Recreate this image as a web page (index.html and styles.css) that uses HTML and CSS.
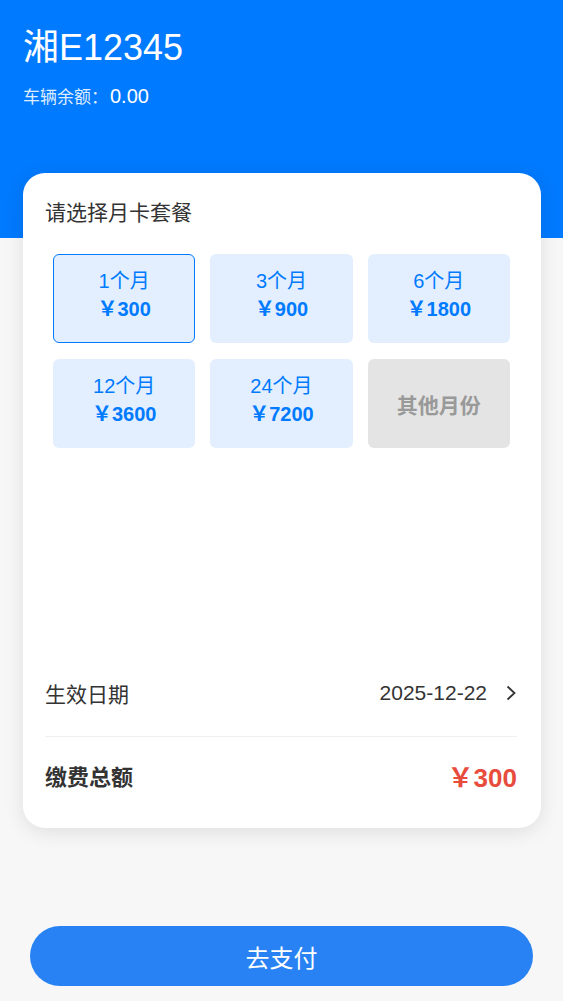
FILE: index.html
```html
<!DOCTYPE html>
<html lang="zh-CN">
<head>
  <meta charset="UTF-8">
  <meta name="viewport" content="width=device-width, initial-scale=1.0">
  <title>月卡缴费</title>
  <link rel="stylesheet" href="styles.css">
</head>
<body>

<div class="header">
  <div class="plate">湘E12345</div>
  <div class="balance">车辆余额：<span class="balance-num">0.00</span></div>
</div>

<div class="card">
  <div class="card-title">请选择月卡套餐</div>
  <div class="options">
    <div class="option active">
      <div class="months">1个月</div>
      <div class="price">￥300</div>
    </div>
    <div class="option">
      <div class="months">3个月</div>
      <div class="price">￥900</div>
    </div>
    <div class="option">
      <div class="months">6个月</div>
      <div class="price">￥1800</div>
    </div>
    <div class="option">
      <div class="months">12个月</div>
      <div class="price">￥3600</div>
    </div>
    <div class="option">
      <div class="months">24个月</div>
      <div class="price">￥7200</div>
    </div>
    <div class="option other">其他月份</div>
  </div>

  <div class="row date-row">
    <span class="label">生效日期</span>
    <span class="date">2025-12-22
      <svg class="arrow" width="12" height="16" viewBox="0 0 12 16"><path d="M2.5 1.5l7 6.5-7 6.5" fill="none" stroke="#333" stroke-width="1.8"/></svg>
    </span>
  </div>
  <div class="row total-row">
    <span class="label total-label">缴费总额</span>
    <span class="total">￥300</span>
  </div>
</div>

<button class="pay-btn">去支付</button>

</body>
</html>
```

FILE: styles.css
```css
body {
  margin: 0;
  background-color: #f7f7f7;
  font-family: "Liberation Sans", "Noto Sans CJK SC", sans-serif;
  color: #333;
}
.header {
  height: 238px;
  background-color: #007aff;
  color: #fff;
  padding: 25px 23px 0;
  box-sizing: border-box;
}
.plate {
  font-size: 36px;
  line-height: 46px;
}
.balance {
  margin-top: 12px;
  font-size: 17px;
  color: rgba(255, 255, 255, 0.88);
}
.balance-num {
  margin-left: 2px;
  font-size: 20px;
  color: #fff;
}
.card {
  margin: -65px 22px 0 23px;
  height: 655px;
  background-color: #fff;
  border-radius: 22px;
  box-shadow: 0 4px 20px rgba(0, 0, 0, 0.1);
  padding: 26px 24px 0 22px;
  box-sizing: border-box;
  display: flex;
  flex-direction: column;
}
.card-title {
  font-size: 21px;
  line-height: 28px;
}
.options {
  display: grid;
  grid-template-columns: repeat(3, 1fr);
  column-gap: 15px;
  row-gap: 16px;
  margin: 27px 7px 0 8px;
}
.option {
  height: 89px;
  border-radius: 6px;
  background-color: #e3effe;
  color: #007aff;
  border: 1px solid transparent;
  box-sizing: border-box;
  padding-bottom: 7px;
  display: flex;
  flex-direction: column;
  align-items: center;
  justify-content: center;
}
.option.active {
  border-color: #007aff;
}
.months {
  font-size: 20px;
  line-height: 28px;
}
.price {
  font-size: 20px;
  font-weight: bold;
  line-height: 28px;
}
.option.other {
  background-color: #e4e4e4;
  color: #999;
  font-size: 21px;
  font-weight: bold;
  padding-bottom: 0;
}
.row {
  display: flex;
  justify-content: space-between;
  align-items: center;
}
.date-row {
  margin-top: auto;
  height: 86px;
  border-bottom: 1px solid #f0f0f0;
}
.label {
  font-size: 21px;
}
.date {
  font-size: 21px;
  display: flex;
  align-items: center;
  gap: 18px;
}
.total-row {
  height: 76px;
  margin-bottom: 15px;
}
.total-label {
  font-size: 22px;
  font-weight: bold;
}
.total {
  color: #e84c3d;
  font-size: 26px;
  font-weight: bold;
}
.pay-btn {
  display: block;
  margin: 98px 30px 0;
  width: calc(100% - 60px);
  height: 60px;
  border: none;
  border-radius: 30px;
  background-color: #2882f3;
  color: #fff;
  font-family: "Liberation Sans", "Noto Sans CJK SC", sans-serif;
  font-size: 24px;
}
```
